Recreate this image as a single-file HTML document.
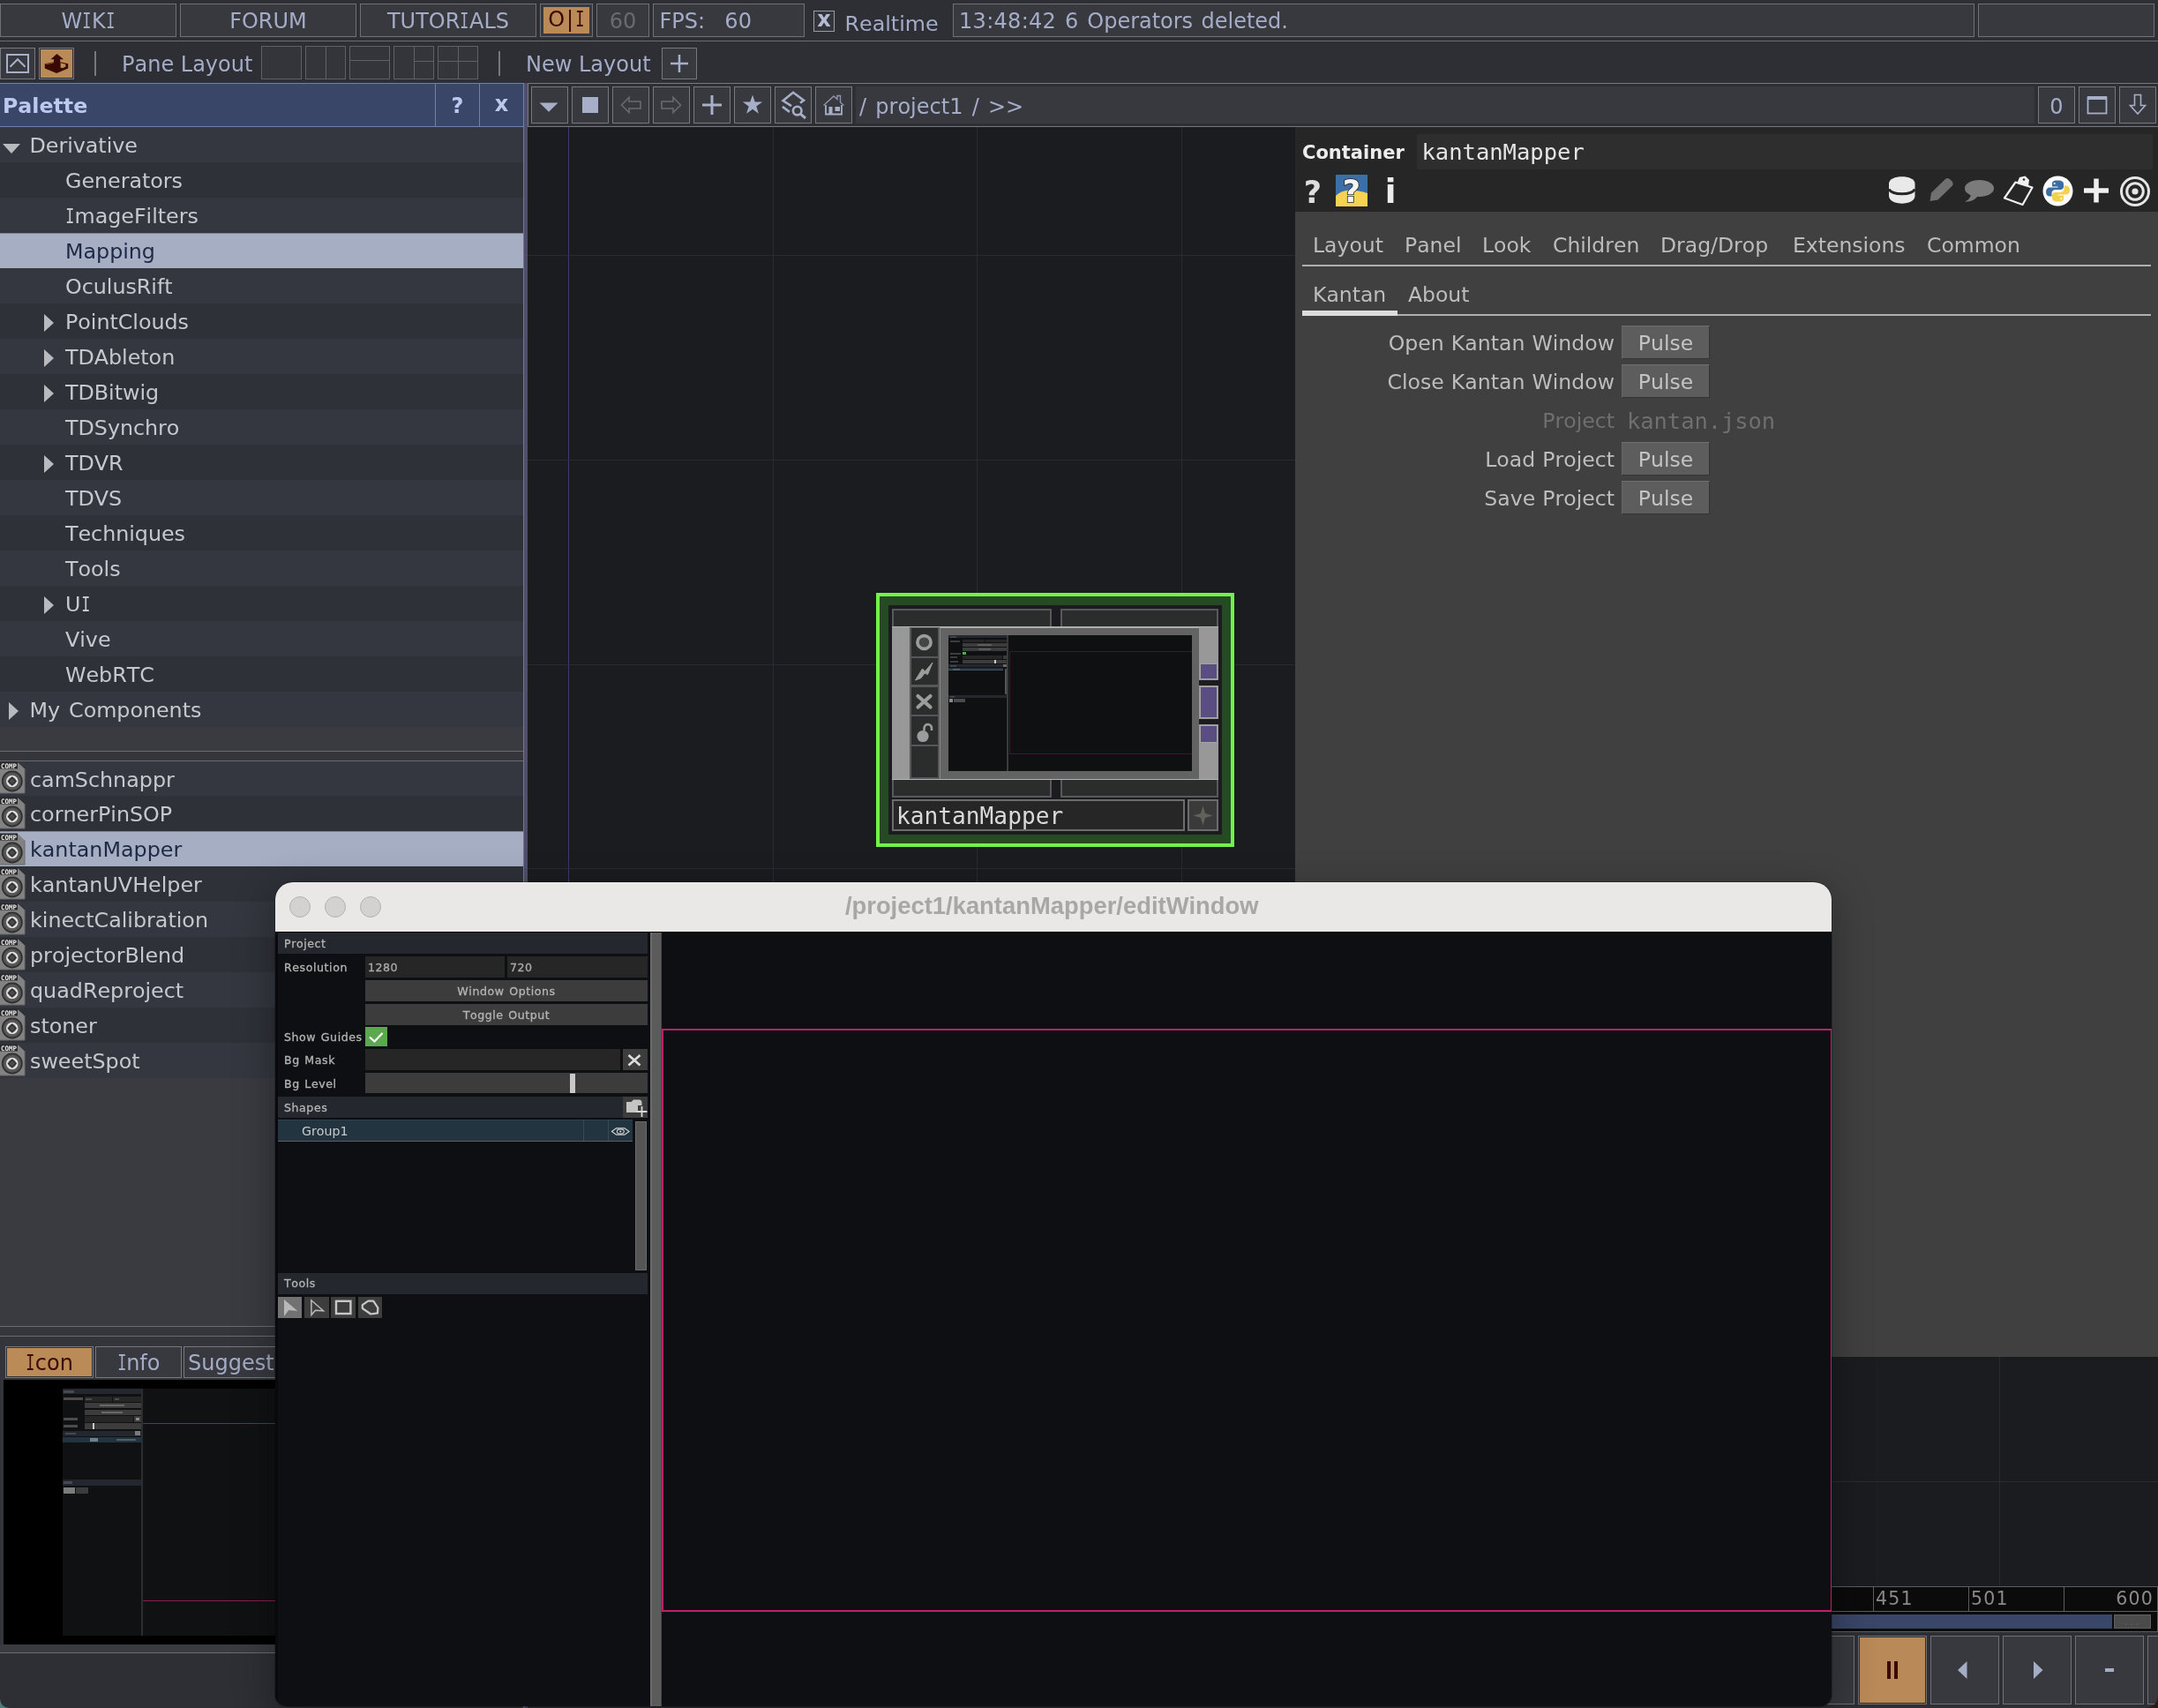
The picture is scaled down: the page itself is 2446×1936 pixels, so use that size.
<!DOCTYPE html>
<html lang="en">
<head>
<meta charset="utf-8">
<title>TouchDesigner - kantanMapper</title>
<style>
*{box-sizing:border-box;margin:0;padding:0}
html,body{width:2446px;height:1936px;overflow:hidden;background:#2e2f34}
body{position:relative;font-family:"DejaVu Sans","Liberation Sans",sans-serif;color:#a4acc7;font-size:24px}
.a{position:absolute}
.mono{font-family:"DejaVu Sans Mono","Liberation Mono",monospace}
svg{position:absolute;overflow:visible}
/* top bar */
.tb{position:absolute;top:4px;height:38px;border:1px solid #707176;background:#38393e;color:#a4acc7;font-size:24px;line-height:39px;text-align:center;white-space:nowrap}
.hl{position:absolute;left:0;width:2446px;height:1px;background:#6c6d72}
.b2{position:absolute;top:52px;height:38px;border:1px solid #606166;background:#34353b}
.nb{position:absolute;top:98px;width:42px;height:42px;border:1px solid #77787c;background:#38393e}
.I{display:inline-block;font-family:"DejaVu Sans Mono",monospace;transform:scaleX(.7);margin:0 -1.9px;padding:0}
body{font-kerning:none;will-change:transform;background:transparent}
/* palette */
.prow{position:absolute;left:0;width:593px;height:40px;line-height:43px;font-size:23.8px;letter-spacing:-.03px;word-spacing:2.500px;overflow:hidden;color:#c6c8cd;white-space:nowrap}
.prow.o{background:#353740}
.prow.e{background:#2f3139}
.prow.sel{background:#a6aec3;color:#1d2945;border-top:1px solid #7d818c;line-height:41px}
.prow.c{line-height:43px;letter-spacing:0}
.prow.c.sel{line-height:41px}
.tri-r{position:absolute;width:0;height:0;border-left:11px solid #b9babd;border-top:10px solid transparent;border-bottom:10px solid transparent}
.tri-d{position:absolute;width:0;height:0;border-top:11px solid #b9babd;border-left:10px solid transparent;border-right:10px solid transparent}

/* params */
.ptab{position:absolute;font-size:23.5px;color:#bcbcbc;height:40px;line-height:42px;white-space:nowrap}
.plab{position:absolute;left:1448px;width:382px;text-align:right;font-size:23.6px;word-spacing:.6px;color:#bdbdbd;height:40px;line-height:42px;white-space:nowrap}
.pulse{position:absolute;left:1838px;width:100px;height:38px;margin-top:1px;background:#5d5d5d;border:1px solid #333;border-top-color:#6f6f6f;border-left-color:#666;color:#c4c4c4;font-size:23.5px;line-height:38px;text-align:center}

/* floating window */
#fw{position:absolute;left:312px;top:1000px;width:1764px;height:934px;border-radius:20px 20px 13px 13px;background:#0e0f12;box-shadow:0 12px 44px 4px rgba(0,0,0,.3),0 0 0 1px rgba(0,0,0,.22);overflow:hidden}
#fw .l{position:absolute;left:10px;font-size:12.6px;letter-spacing:.56px;word-spacing:1px;color:#b4b4b4;height:24px;line-height:26px;white-space:nowrap;-webkit-text-stroke:.3px #b4b4b4}
#fw .h{position:absolute;left:3px;width:419px;height:24px;background:#24272d}
#fw .f{position:absolute;height:24px;background:#262626;color:#aaa;font-size:12.6px;letter-spacing:.45px;line-height:26px;padding-left:3px;-webkit-text-stroke:.3px #aaa}
#fw .b{position:absolute;left:102px;width:320px;height:24px;background:#3c3c3c;color:#b4b4b4;font-size:12.6px;letter-spacing:.56px;word-spacing:1px;line-height:26px;text-align:center;-webkit-text-stroke:.3px #b4b4b4}
#fw .t{position:absolute;top:470px;width:28px;height:24px;background:#3d3d3d}
</style>
</head>
<body>
<svg width="0" height="0" style="left:-10px;top:-10px"><defs>
<g id="comp">
<path d="M0 1.5H20.5L28 8.5V36H0Z" fill="#828282"/>
<path d="M0 36H28V8.5" fill="none" stroke="#6a6a6a" stroke-width="1"/>
<rect x="0" y="0.5" width="20" height="8" fill="#2a2a2a"/>
<text x="1" y="7.6" font-family="DejaVu Sans Mono,Liberation Mono,monospace" font-weight="bold" font-size="7.6" fill="#e6e6e6" textLength="18" lengthAdjust="spacingAndGlyphs">COMP</text>
<circle cx="13.8" cy="22.5" r="11.2" fill="#4c4c4c" stroke="#2c2c2c" stroke-width="1.4"/>
<circle cx="13.8" cy="22.5" r="8.2" fill="none" stroke="#5e5e5e" stroke-width="1.6"/>
<circle cx="13.8" cy="22.5" r="5.700" fill="#8a8a8a" stroke="#e2e2e2" stroke-width="2.200"/>
<path d="M13.8 17.100L19.200 22.500L13.8 27.900L8.400 22.500Z" fill="#343434"/>
<path d="M13.8 20.300L16 22.500L13.8 24.700L11.600 22.500Z" fill="#444" stroke="#686868" stroke-width="0.700"/>
</g>
</defs></svg>
<!-- ===== TOP ROW 1 ===== -->
<div id="top1">
<div class="tb" style="left:0;width:200px">W<span class="I">I</span>K<span class="I">I</span></div>
<div class="tb" style="left:204px;width:200px">FORUM</div>
<div class="tb" style="left:408px;width:200px">TUTOR<span class="I">I</span>ALS</div>
<div class="tb" style="left:612px;width:60px"></div>
<div class="a" style="left:616px;top:8px;width:52px;height:30px;background:#ba8a57;color:#3a0a02;font-size:24px;line-height:28px;text-align:center"><span style="letter-spacing:2px">O|</span><span class="I">I</span></div>
<div class="tb" style="left:676px;width:60px;color:#6a6b71">60</div>
<div class="tb" style="left:740px;width:172px;text-align:left;padding-left:6.500px;white-space:pre;word-spacing:3.500px">FPS:  60</div>
<div class="a" style="left:922px;top:12px;width:24px;height:24px;border:1px solid #9a9ca6;background:#34353b;color:#b4bbd3;font-weight:bold;font-size:24px;line-height:18px;text-align:center">x</div>
<div class="a" style="left:957.500px;top:8px;height:38px;line-height:38px;font-size:23.800px;color:#a4acc7">Realtime</div>
<div class="tb" style="left:1080px;width:1158px;text-align:left;padding-left:6px;word-spacing:2px"><span style="letter-spacing:.3px">13:48:42 6</span> <span style="letter-spacing:-.03px">Operators deleted.</span></div>
<div class="tb" style="left:2242px;width:200px"></div>
<div class="hl" style="top:46px"></div>
</div>
<!-- ===== TOP ROW 2 ===== -->
<div id="top2">
<div class="b2" style="left:0;width:40px;top:54px;height:36px;border-color:#77787c;background:#38393e"></div>
<svg style="left:0;top:54px" width="40" height="36" viewBox="0 0 40 36"><rect x="8" y="8" width="24" height="20" fill="none" stroke="#a7afca" stroke-width="2"/><path d="M11.500 21.700L20 13.200L28.500 21.700" fill="none" stroke="#a7afca" stroke-width="2"/></svg>
<div class="b2" style="left:44px;width:40px;top:54px;height:36px;border-color:#77787c;background:#2e2f34"></div>
<div class="a" style="left:46px;top:56px;width:36px;height:32px;background:#ba8a57"></div>
<svg style="left:46px;top:56px" width="36" height="32" viewBox="0 0 36 32"><path d="M18.500 5L26 11.200H22.200V14.200L31.200 16.300V21.600L18.200 27L4.800 21.600V16.300L15 14.200V11.200H11.500Z" fill="#3a0a02"/><path d="M22.600 15.300L28.400 16.800V19.800L24.600 21.300L22.600 20.600Z" fill="#ba8a57"/><path d="M6 16.800L14.800 15" stroke="#ba8a57" stroke-width=".6"/></svg>
<div class="a" style="left:107px;top:58px;width:2px;height:28px;background:#77787d"></div>
<div class="a" style="left:138px;top:52px;height:42px;line-height:42px;font-size:24px">Pane Layout</div>
<div class="b2" style="left:296px;width:46px"></div>
<div class="b2" style="left:346px;width:46px"></div><div class="a" style="left:369px;top:53px;width:1px;height:36px;background:#606166"></div>
<div class="b2" style="left:396px;width:46px"></div><div class="a" style="left:397px;top:68px;width:44px;height:1px;background:#606166"></div>
<div class="b2" style="left:446px;width:46px"></div><div class="a" style="left:469px;top:53px;width:1px;height:36px;background:#606166"></div><div class="a" style="left:469px;top:69px;width:22px;height:1px;background:#606166"></div>
<div class="b2" style="left:496px;width:46px"></div><div class="a" style="left:519px;top:53px;width:1px;height:36px;background:#606166"></div><div class="a" style="left:497px;top:69px;width:44px;height:1px;background:#606166"></div>
<div class="a" style="left:565px;top:58px;width:2px;height:28px;background:#77787d"></div>
<div class="a" style="left:596px;top:52px;height:42px;line-height:42px;font-size:24px">New Layout</div>
<div class="b2" style="left:750px;width:40px;top:54px;height:36px;border-color:#77787c;background:#38393e"></div>
<svg style="left:750px;top:54px" width="40" height="36" viewBox="0 0 40 36"><path d="M20 8V28M10 18H30" stroke="#a7afca" stroke-width="2.5" fill="none"/></svg>
</div>
<!-- ===== PALETTE HEADER ===== -->
<div id="palhead">
<div class="a" style="left:0;top:94px;width:594px;height:50px;background:#3a4668;border:1px solid #6d80b0;border-left:none"></div>
<div class="a" style="left:493px;top:95px;width:1px;height:48px;background:#6d80b0"></div>
<div class="a" style="left:543px;top:95px;width:1px;height:48px;background:#6d80b0"></div>
<div class="a" style="left:3px;top:97px;height:46px;line-height:46px;font-size:23.7px;font-weight:bold;color:#bcc8ee">Palette</div>
<div class="a" style="left:494px;top:97px;width:49px;height:46px;line-height:46px;font-size:24px;font-weight:bold;color:#bcc8ee;text-align:center">?</div>
<div class="a" style="left:544px;top:95px;width:49px;height:46px;line-height:46px;font-size:24px;font-weight:bold;color:#bcc8ee;text-align:center">x</div>
</div>
<div id="pallist">
<div class="prow o" style="top:144px;padding-left:33.5px"><i class="tri-d" style="left:3px;top:19px"></i>Derivative</div>
<div class="prow e" style="top:184px;padding-left:74px">Generators</div>
<div class="prow o" style="top:224px;padding-left:74px"><span class="I">I</span>mageFilters</div>
<div class="prow sel" style="top:264px;padding-left:74px">Mapping</div>
<div class="prow o" style="top:304px;padding-left:74px">OculusRift</div>
<div class="prow e" style="top:344px;padding-left:74px"><i class="tri-r" style="left:50px;top:12px"></i>PointClouds</div>
<div class="prow o" style="top:384px;padding-left:74px"><i class="tri-r" style="left:50px;top:12px"></i>TDAbleton</div>
<div class="prow e" style="top:424px;padding-left:74px"><i class="tri-r" style="left:50px;top:12px"></i>TDBitwig</div>
<div class="prow o" style="top:464px;padding-left:74px">TDSynchro</div>
<div class="prow e" style="top:504px;padding-left:74px"><i class="tri-r" style="left:50px;top:12px"></i>TDVR</div>
<div class="prow o" style="top:544px;padding-left:74px">TDVS</div>
<div class="prow e" style="top:584px;padding-left:74px">Techniques</div>
<div class="prow o" style="top:624px;padding-left:74px">Tools</div>
<div class="prow e" style="top:664px;padding-left:74px"><i class="tri-r" style="left:50px;top:12px"></i>U<span class="I">I</span></div>
<div class="prow o" style="top:704px;padding-left:74px">Vive</div>
<div class="prow e" style="top:744px;padding-left:74px">WebRTC</div>
<div class="prow o" style="top:784px;padding-left:33.5px"><i class="tri-r" style="left:10px;top:12px"></i>My Components</div>
<div class="a" style="left:0;top:824px;width:593px;height:27px;background:#3a3b40"></div>
<div class="a" style="left:0;top:851px;width:593px;height:1px;background:#6a6c74"></div>
<div class="a" style="left:0;top:852px;width:593px;height:10px;background:#35363c"></div>
<div class="a" style="left:0;top:862px;width:593px;height:1px;background:#6a6c74"></div>
<div class="prow c o" style="top:863px;height:39px;padding-left:34px"><svg class="ci" width="30" height="38" style="left:0;top:0px"><use href="#comp"/></svg>camSchnappr</div>
<div class="prow c e" style="top:902px;height:40px;padding-left:34px"><svg class="ci" width="30" height="38" style="left:0;top:1px"><use href="#comp"/></svg>cornerPinSOP</div>
<div class="prow c sel" style="top:942px;height:40px;padding-left:34px"><svg class="ci" width="30" height="38" style="left:0;top:1px"><use href="#comp"/></svg>kantanMapper</div>
<div class="prow c e" style="top:982px;height:40px;padding-left:34px"><svg class="ci" width="30" height="38" style="left:0;top:1px"><use href="#comp"/></svg>kantanUVHelper</div>
<div class="prow c o" style="top:1022px;height:40px;padding-left:34px"><svg class="ci" width="30" height="38" style="left:0;top:1px"><use href="#comp"/></svg>kinectCalibration</div>
<div class="prow c e" style="top:1062px;height:40px;padding-left:34px"><svg class="ci" width="30" height="38" style="left:0;top:1px"><use href="#comp"/></svg>projectorBlend</div>
<div class="prow c o" style="top:1102px;height:40px;padding-left:34px"><svg class="ci" width="30" height="38" style="left:0;top:1px"><use href="#comp"/></svg>quadReproject</div>
<div class="prow c e" style="top:1142px;height:40px;padding-left:34px"><svg class="ci" width="30" height="38" style="left:0;top:1px"><use href="#comp"/></svg>stoner</div>
<div class="prow c o" style="top:1182px;height:40px;padding-left:34px"><svg class="ci" width="30" height="38" style="left:0;top:1px"><use href="#comp"/></svg>sweetSpot</div>
<div class="a" style="left:0;top:1222px;width:593px;height:281px;background:#3a3b40"></div>
</div>
<div id="palbottom">
<div class="a" style="left:0;top:1503px;width:593px;height:1px;background:#6a6c74"></div>
<div class="a" style="left:0;top:1504px;width:593px;height:10px;background:#35363c"></div>
<div class="a" style="left:0;top:1514px;width:593px;height:1px;background:#6a6c74"></div>
<div class="a" style="left:0;top:1515px;width:593px;height:358px;background:#34353b"></div>
<div class="a" style="left:6px;top:1526px;width:100px;height:36px;border:1px solid #77787c;background:#2e2f34"></div>
<div class="a" style="left:8px;top:1528px;width:96px;height:32px;background:#ba8a57;color:#3a0a02;font-size:24px;line-height:35px;text-align:center"><span class="I">I</span>con</div>
<div class="a" style="left:108px;top:1526px;width:98px;height:36px;border:1px solid #77787c;background:#38393e;color:#a4acc7;font-size:24px;line-height:37px;text-align:center"><span class="I">I</span>nfo</div>
<div class="a" style="left:208px;top:1526px;width:120px;height:36px;border:1px solid #77787c;background:#38393e;color:#a4acc7;font-size:24px;line-height:37px;text-align:left;padding-left:4px">Suggest</div>
<div class="a" style="left:4px;top:1564px;width:589px;height:300px;background:#000"></div>
<div class="a" style="left:71px;top:1574px;width:522px;height:280px;background:#101113"></div>
<div class="a" style="left:71px;top:1574px;width:89px;height:6px;background:#24272d"></div>
<div class="a" style="left:72px;top:1576px;width:12px;height:3px;background:#464a50"></div>
<div class="a" style="left:72px;top:1584px;width:22px;height:3px;background:#4c4c4c"></div>
<div class="a" style="left:96px;top:1583px;width:31px;height:6px;background:#262626"></div>
<div class="a" style="left:128px;top:1583px;width:32px;height:6px;background:#262626"></div>
<div class="a" style="left:97px;top:1585px;width:7px;height:2px;background:#4c4c4c"></div>
<div class="a" style="left:130px;top:1585px;width:5px;height:2px;background:#4c4c4c"></div>
<div class="a" style="left:96px;top:1590px;width:64px;height:6px;background:#3c3c3c"></div>
<div class="a" style="left:113px;top:1592px;width:28px;height:2px;background:#686868"></div>
<div class="a" style="left:96px;top:1598px;width:64px;height:6px;background:#3c3c3c"></div>
<div class="a" style="left:115px;top:1600px;width:24px;height:2px;background:#686868"></div>
<div class="a" style="left:72px;top:1607px;width:16px;height:3px;background:#4c4c4c"></div>
<div class="a" style="left:96px;top:1605px;width:55px;height:7px;background:#262626"></div>
<div class="a" style="left:152px;top:1605px;width:8px;height:7px;background:#3c3c3c"></div>
<div class="a" style="left:154px;top:1607px;width:4px;height:3px;background:#8a8a8a"></div>
<div class="a" style="left:72px;top:1615px;width:16px;height:3px;background:#4c4c4c"></div>
<div class="a" style="left:96px;top:1613px;width:64px;height:7px;background:#3c3c3c"></div>
<div class="a" style="left:105px;top:1613px;width:2px;height:7px;background:#c8c8c8"></div>
<div class="a" style="left:71px;top:1622px;width:89px;height:6px;background:#24272d"></div>
<div class="a" style="left:74px;top:1624px;width:12px;height:2px;background:#464a50"></div>
<div class="a" style="left:153px;top:1622px;width:6px;height:5px;background:#7a7a7a"></div>
<div class="a" style="left:71px;top:1629px;width:89px;height:6px;background:#22343f"></div>
<div class="a" style="left:102px;top:1630px;width:9px;height:4px;background:#70808a"></div>
<div class="a" style="left:132px;top:1631px;width:22px;height:2px;background:#4c6068"></div>
<div class="a" style="left:71px;top:1677px;width:89px;height:7px;background:#24272d"></div>
<div class="a" style="left:72px;top:1679px;width:10px;height:3px;background:#464a50"></div>
<div class="a" style="left:72px;top:1686px;width:13px;height:7px;background:#7c7c7c"></div>
<div class="a" style="left:86px;top:1686px;width:14px;height:7px;background:#3c3c3c"></div>
<div class="a" style="left:160px;top:1574px;width:2px;height:280px;background:#2c2d30"></div>
<div class="a" style="left:162px;top:1613px;width:431px;height:1px;background:#8c1c55"></div>
<div class="a" style="left:162px;top:1814px;width:431px;height:1px;background:#8c1c55"></div>
<div class="a" style="left:0;top:1864px;width:593px;height:9px;background:#3a3b40"></div>
<div class="a" style="left:0;top:1873px;width:593px;height:1px;background:#6a6c74"></div>
<div class="a" style="left:0;top:1874px;width:593px;height:62px;background:#2e2f34"></div>
</div>
<div class="a" style="left:593px;top:144px;width:1px;height:1792px;background:#77787c"></div>
<div class="a" style="left:594px;top:94px;width:4px;height:1842px;background:#4f4f69"></div>

<div id="network">
<div class="a" style="left:598px;top:94px;width:1848px;height:50px;background:#2e2f34;border:1px solid #77787c;border-right:none"></div>
<div class="a" style="left:598px;top:144px;width:1848px;height:1654px;background:#1b1c20"></div>
<div class="a" style="left:644px;top:144px;width:1px;height:1654px;background:#3b3b6c"></div>
<div class="a" style="left:876px;top:144px;width:1px;height:1654px;background:#2a2b31"></div>
<div class="a" style="left:1107px;top:144px;width:1px;height:1654px;background:#2a2b31"></div>
<div class="a" style="left:1339px;top:144px;width:1px;height:1654px;background:#2a2b31"></div>
<div class="a" style="left:598px;top:289px;width:1848px;height:1px;background:#2a2b31"></div>
<div class="a" style="left:598px;top:521px;width:1848px;height:1px;background:#2a2b31"></div>
<div class="a" style="left:598px;top:753px;width:1848px;height:1px;background:#2a2b31"></div>
<div class="a" style="left:598px;top:984px;width:1848px;height:1px;background:#2a2b31"></div>
<div class="a" style="left:1571px;top:144px;width:1px;height:1654px;background:#2a2b31"></div>
<div class="a" style="left:1803px;top:144px;width:1px;height:1654px;background:#2a2b31"></div>
<div class="a" style="left:2034px;top:144px;width:1px;height:1654px;background:#2a2b31"></div>
<div class="a" style="left:2266px;top:144px;width:1px;height:1654px;background:#2a2b31"></div>
<div class="a" style="left:598px;top:1216px;width:1848px;height:1px;background:#2a2b31"></div>
<div class="a" style="left:598px;top:1448px;width:1848px;height:1px;background:#2a2b31"></div>
<div class="a" style="left:598px;top:1679px;width:1848px;height:1px;background:#2a2b31"></div>
<!-- toolbar buttons -->
<div class="nb" style="left:602px"></div>
<svg style="left:602px;top:98px" width="42" height="42"><path d="M9.500 18.500H30.500L20 28.700Z" fill="#a7afc8"/></svg>
<div class="nb" style="left:648px"></div>
<div class="a" style="left:660px;top:110px;width:18px;height:18px;background:#a7afc8"></div>
<div class="nb" style="left:694px"></div>
<svg style="left:694px;top:98px" width="42" height="42"><path d="M10.5 21L19 12.5V17H32V25H19V29.5Z" fill="none" stroke="#696a6f" stroke-width="1.6"/></svg>
<div class="nb" style="left:740px"></div>
<svg style="left:740px;top:98px" width="42" height="42"><path d="M31.5 21L23 12.5V17H10V25H23V29.5Z" fill="none" stroke="#696a6f" stroke-width="1.6"/></svg>
<div class="nb" style="left:786px"></div>
<svg style="left:786px;top:98px" width="42" height="42"><path d="M21 10V32M10 21H32" stroke="#a7afc8" stroke-width="3" fill="none"/></svg>
<div class="nb" style="left:832px"></div>
<svg style="left:832px;top:98px" width="42" height="42"><path d="M21 9.5L23.7 17.6H32.2L25.3 22.6L27.9 30.7L21 25.7L14.1 30.7L16.7 22.6L9.8 17.6H18.3Z" fill="#a7afc8"/></svg>
<div class="nb" style="left:878px"></div>
<svg style="left:878px;top:98px" width="42" height="42"><path d="M19 22.200L9.500 16.200L21 6.800L33 15.800L29 18.600" fill="none" stroke="#a7afc8" stroke-width="2.600" stroke-linejoin="miter"/><path d="M8.900 22.900L16.900 28.900" stroke="#a7afc8" stroke-width="2.600"/><circle cx="25.700" cy="27.600" r="4.800" fill="none" stroke="#a7afc8" stroke-width="2.600"/><path d="M29.300 31.200L35 36" stroke="#a7afc8" stroke-width="3"/></svg>
<div class="nb" style="left:924px"></div>
<svg style="left:924px;top:98px" width="42" height="42"><path d="M9.5 21.5L21 11L25 14.5V10.5H28.5V18L32.5 21.5" fill="none" stroke="#8e94aa" stroke-width="1.4"/><path d="M12 21V31.5H30V21" fill="none" stroke="#a7afc8" stroke-width="1.8"/><rect x="15.5" y="23" width="4" height="8.5" fill="#a7afc8"/><rect x="22.5" y="23" width="5.5" height="5" fill="#a7afc8"/></svg>
<div class="a" style="left:970px;top:98px;width:1336px;height:42px;background:#38393e;color:#a4acc7;font-size:24px;line-height:47px;padding-left:4px;white-space:pre;word-spacing:2.600px">/ project1 / &gt;&gt;</div>
<div class="nb" style="left:2310px;color:#a4acc7;font-size:24px;line-height:44px;text-align:center">0</div>
<div class="nb" style="left:2356px"></div>
<svg style="left:2356px;top:98px" width="42" height="42"><rect x="10.5" y="12.5" width="21" height="18" fill="none" stroke="#a7afc8" stroke-width="1.8"/><rect x="10" y="11" width="22" height="4" fill="#a7afc8"/></svg>
<div class="nb" style="left:2402px"></div>
<svg style="left:2402px;top:98px" width="42" height="42"><path d="M17.5 9.5H24.5V21.5H29.5L21 31L12.5 21.5H17.5Z" fill="none" stroke="#a7afc8" stroke-width="1.6"/></svg>
<div id="node">
<div class="a" style="left:993px;top:672px;width:406px;height:288px;background:#254a24;border:4px solid #72f44b"></div>
<div class="a" style="left:1007px;top:686px;width:378px;height:260px;background:#1c1c20"></div>
<div class="a" style="left:1011px;top:690px;width:181px;height:20px;background:#2b2c2c;border:2px solid #57595b;border-bottom:none"></div>
<div class="a" style="left:1011px;top:884px;width:181px;height:20px;background:#2b2c2c;border:2px solid #57595b;border-top:none"></div>
<div class="a" style="left:1202px;top:690px;width:179px;height:20px;background:#2b2c2c;border:2px solid #57595b;border-bottom:none"></div>
<div class="a" style="left:1202px;top:884px;width:179px;height:20px;background:#2b2c2c;border:2px solid #57595b;border-top:none"></div>
<div class="a" style="left:1011px;top:710px;width:370px;height:174px;background:#989898;border-top:1px solid #b4b4b4;border-bottom:1px solid #b4b4b4"></div>
<div class="a" style="left:1031px;top:711px;width:34px;height:172px;background:#55585a"></div>
<div class="a" style="left:1033.2px;top:712px;width:29.6px;height:31.5px;background:#2b2c2c"></div>
<div class="a" style="left:1033.2px;top:746.3px;width:29.6px;height:29.5px;background:#2b2c2c"></div>
<div class="a" style="left:1033.2px;top:778.5px;width:29.6px;height:31px;background:#2b2c2c"></div>
<div class="a" style="left:1033.2px;top:812.4px;width:29.6px;height:31.2px;background:#2b2c2c"></div>
<div class="a" style="left:1033.2px;top:846.4px;width:29.6px;height:35px;background:#2b2c2c"></div>
<div class="a" style="left:1065px;top:711px;width:294px;height:172px;background:#636363;border-top:1px solid #a8a8a8;border-left:1px solid #8a8a8a"></div>
<div class="a" style="left:1075px;top:720px;width:276px;height:154px;background:#0f1012"></div>
<div class="a" style="left:1075px;top:720px;width:66px;height:3px;background:#24272d"></div>
<div class="a" style="left:1091px;top:725px;width:25px;height:3px;background:#262626"></div>
<div class="a" style="left:1117px;top:725px;width:24px;height:3px;background:#262626"></div>
<div class="a" style="left:1091px;top:729px;width:50px;height:4px;background:#3c3c3c"></div>
<div class="a" style="left:1091px;top:734px;width:50px;height:4px;background:#3c3c3c"></div>
<div class="a" style="left:1091px;top:739px;width:4px;height:3px;background:#5aa94f"></div>
<div class="a" style="left:1091px;top:743px;width:45px;height:4px;background:#262626"></div>
<div class="a" style="left:1137px;top:743px;width:4px;height:4px;background:#3c3c3c"></div>
<div class="a" style="left:1091px;top:748px;width:50px;height:4px;background:#3c3c3c"></div>
<div class="a" style="left:1127px;top:748px;width:2px;height:4px;background:#cccccc"></div>
<div class="a" style="left:1075px;top:753px;width:66px;height:3px;background:#24272d"></div>
<div class="a" style="left:1137px;top:753px;width:4px;height:3px;background:#6a6a6a"></div>
<div class="a" style="left:1075px;top:757px;width:62px;height:3px;background:#22343f;border-bottom:1px solid #45545c"></div>
<div class="a" style="left:1139px;top:758px;width:2px;height:29px;background:#555"></div>
<div class="a" style="left:1075px;top:788px;width:66px;height:3px;background:#24272d"></div>
<div class="a" style="left:1076px;top:792px;width:4px;height:4px;background:#8a8a8a"></div>
<div class="a" style="left:1081px;top:792px;width:13px;height:4px;background:#4a4a4a"></div>
<div class="a" style="left:1077px;top:726px;width:11px;height:2px;background:#3c3c3e"></div>
<div class="a" style="left:1077px;top:740px;width:12px;height:2px;background:#3c3c3e"></div>
<div class="a" style="left:1077px;top:744px;width:8px;height:2px;background:#3c3c3e"></div>
<div class="a" style="left:1077px;top:749px;width:9px;height:2px;background:#3c3c3e"></div>
<div class="a" style="left:1077px;top:721px;width:7px;height:2px;background:#40444a"></div>
<div class="a" style="left:1077px;top:754px;width:7px;height:2px;background:#40444a"></div>
<div class="a" style="left:1077px;top:789px;width:5px;height:2px;background:#40444a"></div>
<div class="a" style="left:1108px;top:730px;width:16px;height:2px;background:#5a5a5a"></div>
<div class="a" style="left:1109px;top:735px;width:14px;height:2px;background:#5a5a5a"></div>
<div class="a" style="left:1080px;top:758px;width:8px;height:2px;background:#506068"></div>
<div class="a" style="left:1141px;top:720px;width:2px;height:154px;background:#3a3a3a"></div>
<div class="a" style="left:1144px;top:738px;width:207px;height:117px;background:transparent;border:1px solid #47142f;border-right:none"></div>
<div class="a" style="left:1359px;top:711px;width:22px;height:172px;background:#989898"></div>
<div class="a" style="left:1360px;top:752px;width:20px;height:18px;background:#5a4d82;border:1px solid #a4a4a4"></div>
<div class="a" style="left:1359px;top:771px;width:22px;height:6px;background:#1c1c20"></div>
<div class="a" style="left:1360px;top:778px;width:20px;height:36px;background:#5a4d82;border:1px solid #a4a4a4"></div>
<div class="a" style="left:1359px;top:815px;width:22px;height:6px;background:#1c1c20"></div>
<div class="a" style="left:1360px;top:822px;width:20px;height:20px;background:#5a4d82;border:1px solid #a4a4a4"></div>
<div class="a mono" style="left:1011px;top:906px;width:332px;height:36px;background:#262626;border:2px solid #6c6c6c;color:#d9d9d9;font-size:26.200px;line-height:34px;padding-left:3px;white-space:nowrap">kantanMapper</div>
<div class="a" style="left:1346px;top:906px;width:35px;height:36px;background:#3a3a3a;border:2px solid #6c6c6c"></div>
<svg style="left:1346px;top:906px" width="35" height="36"><path d="M17.500 7.500L20 16L28.500 18.500L20 21L17.500 29.500L15 21L6.500 18.500L15 16Z" fill="#5f635c"/></svg>
<svg style="left:1032px;top:711px" width="32" height="172">
<ellipse cx="15.500" cy="17" rx="7.600" ry="7.400" fill="#454545" stroke="#9c9c9c" stroke-width="3.600"/>
<path d="M5.500 60L13.500 47L16.500 50L25 40L19.500 53.500L16 52L12 57.500Z" fill="#9c9c9c" stroke="#9c9c9c" stroke-width="1" stroke-linejoin="round"/>
<path d="M8.500 78L22.500 90.500M22.500 78L8.500 90.500" stroke="#9c9c9c" stroke-width="4.200" stroke-linecap="round" fill="none"/>
<circle cx="14" cy="123.500" r="6.600" fill="#9c9c9c"/>
<path d="M15.500 117.500V114.500Q16 110 20 110Q24 110.500 24 115V117" fill="none" stroke="#9c9c9c" stroke-width="2.600"/>
</svg>
</div>

</div>

<div id="params">
<div class="a" style="left:1468px;top:144px;width:978px;height:96px;background:#262626"></div>
<div class="a" style="left:1468px;top:240px;width:978px;height:1298px;background:#404040"></div>
<div class="a" style="left:1476px;top:151px;height:44px;line-height:44px;font-size:21px;font-weight:bold;color:#ececec">Container</div>
<div class="a mono" style="left:1606px;top:152px;width:834px;height:40px;background:#2e2e2e;color:#e4e4e4;font-size:25.500px;line-height:41px;padding-left:5.500px">kantanMapper</div>
<svg style="left:1468px;top:192px" width="978" height="48" viewBox="1468 192 978 48">
<text x="1488" y="230" text-anchor="middle" font-family="DejaVu Sans,sans-serif" font-weight="bold" font-size="35" fill="#dedede">?</text>
<rect x="1514" y="198" width="36" height="36" fill="#3c6fa8"/>
<path d="M1514 222C1522 214 1534 214 1550 219V234H1514Z" fill="#f6d255"/>
<text x="1532" y="229" text-anchor="middle" font-family="DejaVu Sans,sans-serif" font-weight="bold" font-size="35" fill="#f4f4f4" stroke="#222" stroke-width="1.6" paint-order="stroke">?</text>
<text x="1576" y="230" text-anchor="middle" font-family="DejaVu Sans,sans-serif" font-weight="bold" font-size="37" fill="#ececec">i</text>
<!-- db -->
<path d="M2141 208C2141 197.500 2170.500 197.500 2170.500 208V222C2170.500 233.500 2141 233.500 2141 222Z" fill="#e9e9e9"/>
<path d="M2141 214.500C2145 221.500 2166.500 221.500 2170.500 214.500" fill="none" stroke="#262626" stroke-width="3"/>
<!-- pencil -->
<path d="M2187.500 228L2189 218.500L2205.500 202.500Q2208 201 2210.500 203.500L2213 206Q2214.500 208.500 2212.500 211L2196.500 226.500Z" fill="#707070"/>
<!-- bubble -->
<ellipse cx="2243.500" cy="213.500" rx="16.500" ry="9.500" fill="#7b7b7b"/>
<path d="M2234 219C2234 224 2231 227 2227 228.500C2234 229 2240 226 2242 221Z" fill="#7b7b7b"/>
<!-- clipboard -->
<path d="M2284.500 206.500L2303.500 212.500L2292.500 232L2272 224.500Z" fill="none" stroke="#f0f0f0" stroke-width="2.200" stroke-linejoin="round"/>
<path d="M2286.500 207L2289 201L2295.500 199.500L2300 204L2299 211Z" fill="#f0f0f0"/>
<circle cx="2294" cy="203.500" r="1.300" fill="#262626"/>
<!-- python -->
<circle cx="2332.500" cy="216.500" r="17" fill="#fdfdfd"/>
<path d="M2332 204.500C2326.500 204.500 2326 206.500 2326 208.500V211.500H2332.500V212.500H2323.500C2320.500 212.500 2319 214.500 2319 217.500C2319 220.500 2320.500 222.500 2323.500 222.500H2325.500V219C2325.500 216.500 2327.500 215 2330 215H2335.500C2337.500 215 2339 213.500 2339 211.500V208.500C2339 206.500 2337.500 204.500 2332 204.500Z" fill="#3b6ea6"/>
<circle cx="2328.700" cy="208" r="1.100" fill="#fff"/>
<path d="M2333 228.500C2338.500 228.500 2339 226.500 2339 224.500V221.500H2332.500V220.500H2341.500C2344.500 220.500 2346 218.500 2346 215.500C2346 212.500 2344.500 210.500 2341.500 210.500H2339.500V214C2339.500 216.500 2337.500 218 2335 218H2329.500C2327.500 218 2326 219.500 2326 221.500V224.500C2326 226.500 2327.500 228.500 2333 228.500Z" fill="#f5d04f"/>
<circle cx="2336.300" cy="225" r="1.100" fill="#fff"/>
<!-- plus -->
<path d="M2376 202.500V229.500M2362 216H2390" stroke="#f0f0f0" stroke-width="5.500" fill="none"/>
<!-- target -->
<circle cx="2420" cy="217" r="15.500" fill="none" stroke="#e6e6e6" stroke-width="3"/>
<circle cx="2420" cy="217" r="9.300" fill="none" stroke="#e6e6e6" stroke-width="3"/>
<circle cx="2420" cy="217" r="3.600" fill="#e6e6e6"/>
</svg>

<div class="ptab" style="left:1488px;top:257px">Layout</div>
<div class="ptab" style="left:1592px;top:257px">Panel</div>
<div class="ptab" style="left:1680px;top:257px">Look</div>
<div class="ptab" style="left:1760px;top:257px">Children</div>
<div class="ptab" style="left:1882px;top:257px">Drag/Drop</div>
<div class="ptab" style="left:2032px;top:257px">Extensions</div>
<div class="ptab" style="left:2184px;top:257px">Common</div>
<div class="a" style="left:1476px;top:300px;width:962px;height:2px;background:#b0b0b0"></div>
<div class="ptab" style="left:1488px;top:313px">Kantan</div>
<div class="ptab" style="left:1596px;top:313px">About</div>
<div class="a" style="left:1476px;top:356px;width:962px;height:2px;background:#b0b0b0"></div>
<div class="a" style="left:1476px;top:352px;width:108px;height:6px;background:#dcdcdc"></div>
<div class="plab" style="top:368px">Open Kantan Window</div><div class="pulse" style="top:368px">Pulse</div>
<div class="plab" style="top:412px">Close Kantan Window</div><div class="pulse" style="top:412px">Pulse</div>
<div class="plab" style="top:456px;color:#6f6f6f">Project</div><div class="a mono" style="left:1844px;top:457px;height:40px;line-height:41px;font-size:25.400px;color:#6f6f6f">kantan.json</div>
<div class="plab" style="top:500px">Load Project</div><div class="pulse" style="top:500px">Pulse</div>
<div class="plab" style="top:544px">Save Project</div><div class="pulse" style="top:544px">Pulse</div>
</div>

<div id="timeline">
<div class="a" style="left:598px;top:1798px;width:1848px;height:138px;background:#2e2f34"></div>
<div class="a" style="left:598px;top:1798px;width:1848px;height:52px;background:#0b0b0c;border:1px solid #5c5d61;border-left:none"></div>
<div class="a" style="left:598px;top:1826px;width:1847px;height:1px;background:#5c5d61"></div>
<div class="a" style="left:2123px;top:1799px;width:1px;height:27px;background:#5c5d61"></div>
<div class="a" style="left:2231px;top:1799px;width:1px;height:27px;background:#5c5d61"></div>
<div class="a" style="left:2339px;top:1799px;width:1px;height:27px;background:#5c5d61"></div>
<div class="a" style="left:2126px;top:1799px;height:27px;line-height:26px;font-size:20.5px;letter-spacing:1.200px;color:#8a8a8a">451</div>
<div class="a" style="left:2234px;top:1799px;height:27px;line-height:26px;font-size:20.5px;letter-spacing:1.200px;color:#8a8a8a">501</div>
<div class="a" style="left:2346px;top:1799px;width:95px;text-align:right;height:27px;line-height:26px;font-size:20.5px;letter-spacing:1.200px;color:#8a8a8a">600</div>
<div class="a" style="left:598px;top:1830px;width:1796px;height:16px;background:#3a4668"></div>
<div class="a" style="left:2396px;top:1830px;width:42px;height:16px;background:#4b4b4b;border:1px solid #5e5e5e;color:#5e5e5e;font-size:14px;line-height:12px;text-align:center;letter-spacing:2px">...</div>
<div class="a" style="left:2024px;top:1854px;width:78px;height:78px;border:1px solid #707176;background:#38393e"></div>
<div class="a" style="left:2106px;top:1854px;width:78px;height:78px;border:1px solid #707176;background:#2e2f34"></div>
<div class="a" style="left:2108px;top:1856px;width:74px;height:74px;background:#b98957"></div>
<div class="a" style="left:2139px;top:1883px;width:4px;height:20px;background:#3a0a02"></div>
<div class="a" style="left:2147px;top:1883px;width:4px;height:20px;background:#3a0a02"></div>
<div class="a" style="left:2188px;top:1854px;width:78px;height:78px;border:1px solid #707176;background:#38393e"></div>
<svg style="left:2188px;top:1854px" width="78" height="78"><path d="M31 39L41.500 29V49Z" fill="#a5acc5"/></svg>
<div class="a" style="left:2270px;top:1854px;width:78px;height:78px;border:1px solid #707176;background:#38393e"></div>
<svg style="left:2270px;top:1854px" width="78" height="78"><path d="M45.500 39L35 29V49Z" fill="#a5acc5"/></svg>
<div class="a" style="left:2352px;top:1854px;width:78px;height:78px;border:1px solid #707176;background:#38393e"></div>
<div class="a" style="left:2386px;top:1891px;width:10px;height:4px;background:#a5acc5"></div>
<div class="a" style="left:2434px;top:1854px;width:78px;height:78px;border:1px solid #707176;background:#38393e"></div>
<svg style="left:2426px;top:1916px" width="20" height="20"><path d="M20 6Q19 19 6 20H20Z" fill="#2a1a12"/></svg>
</div>

<div id="fw">
<div class="a" style="left:0;top:0;width:1764px;height:56px;background:#e9e8e6"></div>
<div class="a" style="left:0;top:56px;width:1764px;height:2px;background:#050506"></div>
<div class="a" style="left:16px;top:16px;width:24px;height:24px;border-radius:50%;background:#d4d2d0;border:1px solid #b3b1af"></div>
<div class="a" style="left:56px;top:16px;width:24px;height:24px;border-radius:50%;background:#d4d2d0;border:1px solid #b3b1af"></div>
<div class="a" style="left:96px;top:16px;width:24px;height:24px;border-radius:50%;background:#d4d2d0;border:1px solid #b3b1af"></div>
<div class="a" style="left:0;top:0;width:1764px;height:56px;line-height:54px;text-align:center;font-family:'Liberation Sans',sans-serif;font-weight:bold;font-size:27.4px;color:#a9a7a5;padding-right:3.5px">/project1/kantanMapper/editWindow</div>
<div class="a" style="left:0;top:57px;width:3px;height:880px;background:#0a0a0c"></div>
<div class="h" style="top:57px"></div><div class="l" style="top:57px">Project</div>
<div class="l" style="top:84px">Resolution</div>
<div class="f" style="left:102px;top:84px;width:158px">1280</div>
<div class="f" style="left:263px;top:84px;width:159px">720</div>
<div class="b" style="top:111px">Window Options</div>
<div class="b" style="top:138px">Toggle Output</div>
<div class="l" style="top:163px">Show Guides</div>
<div class="a" style="left:102px;top:164px;width:25px;height:22px;background:#5aa94f"></div>
<svg style="left:102px;top:164px" width="25" height="22"><path d="M5 11.500L10.500 16.500L19.500 7" fill="none" stroke="#fff" stroke-width="2.200"/></svg>
<div class="l" style="top:189px">Bg Mask</div>
<div class="f" style="left:102px;top:189px;width:289px"></div>
<div class="a" style="left:394px;top:189px;width:28px;height:24px;background:#3c3c3c"></div>
<svg style="left:394px;top:189px" width="28" height="24"><path d="M6.500 7L19.500 18.500M19.500 7L6.500 18.500" stroke="#dcdcdc" stroke-width="2.600" fill="none"/></svg>
<div class="l" style="top:216px">Bg Level</div>
<div class="a" style="left:102px;top:216px;width:320px;height:23px;background:#3c3c3c"></div>
<div class="a" style="left:334px;top:217px;width:6px;height:22px;background:#c8c8c8"></div>
<div class="h" style="top:243px"></div><div class="l" style="top:243px">Shapes</div>
<div class="a" style="left:394px;top:243px;width:28px;height:24px;background:#3c3c3c"></div>
<svg style="left:394px;top:243px" width="28" height="24"><path d="M4 6H9.500L12 3.500H18.500Q21.500 3.500 21.500 7V10H17V18H4Z" fill="#c4c4c4"/><path d="M21.500 11V23M15.500 17H27.500" stroke="#d8d8d8" stroke-width="1.800" fill="none"/></svg>
<div class="a" style="left:3px;top:269px;width:402px;height:25px;background:#22343f;border-bottom:1px solid #5a5f63;border-top:1px solid #2c4350"></div>
<div class="a" style="left:349px;top:270px;width:1px;height:23px;background:#3a4a54"></div>
<div class="a" style="left:377px;top:270px;width:1px;height:23px;background:#3a4a54"></div>
<div class="a" style="left:30px;top:270px;height:24px;line-height:25px;font-size:14.2px;color:#c8c8c8">Group1</div>
<svg style="left:378px;top:270px" width="27" height="24"><path d="M3.500 12.500L8.500 8.800H18L23 12.500L18 16.200H8.500Z" fill="none" stroke="#cfcfcf" stroke-width="1.200"/><ellipse cx="13.300" cy="12.500" rx="4" ry="2.600" fill="none" stroke="#cfcfcf" stroke-width="1.100"/><circle cx="13.300" cy="12.500" r="1.100" fill="#cfcfcf"/></svg>
<div class="a" style="left:408px;top:271px;width:13px;height:169px;background:#555;border:1px solid #6a6a6a"></div>
<div class="h" style="top:443px"></div><div class="l" style="top:442px">Tools</div>
<div class="t" style="left:3px;width:27px;background:#727272"></div>
<svg style="left:3px;top:470px" width="27" height="24"><path d="M7 3V22L12.200 15L22.300 16Z" fill="#b9b9b9"/></svg>
<div class="t" style="left:33px"></div>
<svg style="left:33px;top:470px" width="28" height="24"><path d="M7.800 3.800L8 20.500L12.400 15.200L21.500 15.800Z" fill="none" stroke="#bcbcbc" stroke-width="1.500" stroke-linejoin="miter"/></svg>
<div class="t" style="left:63px"></div>
<svg style="left:63px;top:470px" width="28" height="24"><rect x="6" y="4.800" width="16.400" height="14.200" fill="none" stroke="#c8c8c8" stroke-width="2.400"/></svg>
<div class="t" style="left:94px;width:27px"></div>
<svg style="left:94px;top:470px" width="27" height="24"><path d="M4.800 9.200L11.300 4.600L17.200 4.600L22.300 12.400L22 18.400L14.300 19.500L4.800 13Z" fill="none" stroke="#c8c8c8" stroke-width="2.200" stroke-linejoin="round"/></svg>
<div class="a" style="left:425px;top:57px;width:13px;height:880px;background:#5b5b5b;border-left:2px solid #6b6b6b;border-right:1px solid #4a4a4a"></div>
<div class="a" style="left:438px;top:166px;width:1326px;height:661px;border:2px solid #bb226b;border-right-width:1px"></div>
</div>

<svg style="left:0;top:1922px" width="14" height="14"><path d="M0 4Q1 13 10 14H0Z" fill="#4d7c7a"/></svg>
</body>
</html>
